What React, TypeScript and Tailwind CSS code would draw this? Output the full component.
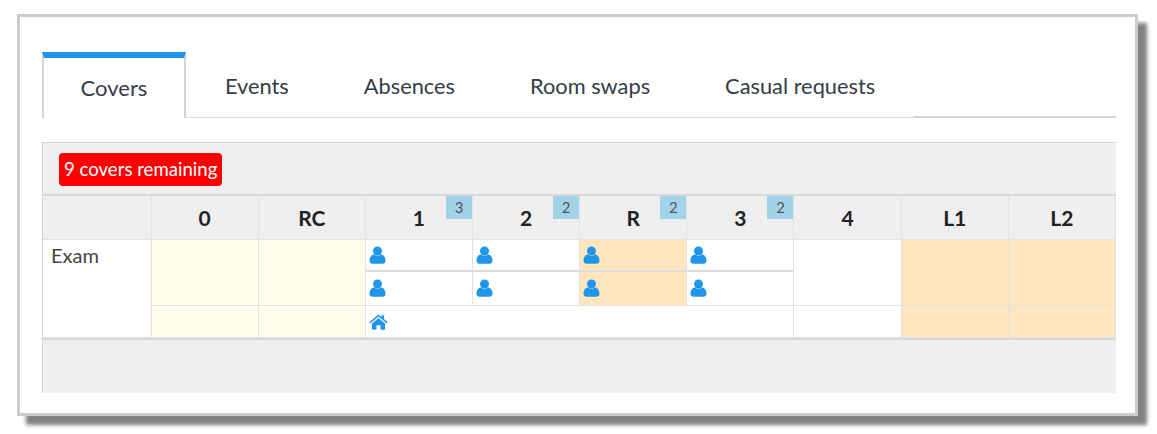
const tabs = ["Events", "Absences", "Room swaps", "Casual requests"];

const headers = [
  { label: "0" },
  { label: "RC" },
  { label: "1", badge: "3" },
  { label: "2", badge: "2" },
  { label: "R", badge: "2" },
  { label: "3", badge: "2" },
  { label: "4" },
  { label: "L1" },
  { label: "L2" },
];

const PersonIcon = () => (
  <svg width="17" height="18" viewBox="0 0 17 18" className="text-[#2196e8]" aria-hidden>
    <circle cx="8.5" cy="5" r="4.5" fill="currentColor" />
    <path d="M0.5 15c0-4 2-6.5 4.5-6.5 1 .8 2.2 1.2 3.5 1.2s2.500-.4 3.500-1.200c2.500 0 4.500 2.500 4.500 6.500 0 2-1.500 2.700-3 2.700H3.500c-1.500 0-3-.7-3-2.700z" fill="currentColor" />
  </svg>
);

const HomeIcon = () => (
  <svg width="19" height="16" viewBox="0 0 19 16" className="text-[#2196e8]" aria-hidden>
    <path d="M9.500 0.500l3 2.500V1.200h2.500v3.900l3.800 3.200-1 1.200-8.300-7-8.300 7-1-1.200z" fill="currentColor" />
    <path d="M9.500 4l6.500 5.500V15c0 .4-.3.700-.7.700H11.500v-4.500h-4v4.500H3.700c-.4 0-.7-.3-.7-.7V9.500z" fill="currentColor" />
  </svg>
);

const cellBorder = "border-r border-b border-[#e2e2e2]";
const topRow = "border-r border-b-2 border-r-[#e2e2e2] border-b-[#dddddd]";

const App = () => {
  return (
    <div className="h-[434px] w-[1157px] bg-white pl-[17px] pt-[14px] font-['Lato','Open_Sans',sans-serif]">
      <div className="h-[402px] w-[1121px] border-[3px] border-[#cccccc] bg-white pl-[22px] pr-[19px] pt-[35px] shadow-[9px_9px_4px_#808080]">
        <div className="flex h-[66px]">
          <div className="flex h-[66px] w-[144px] items-center justify-center border-x-2 border-t-[6px] border-[#d4d4d4] border-t-[#2196e8] bg-white pb-[2px] text-[22px] text-[#333d47]">
            Covers
          </div>
          <div className="flex flex-1 border-b border-[#dddddd] pl-[1.5px]">
            {tabs.map((tab) => (
              <div key={tab} className="flex items-center px-[37.5px] pt-[4px] text-[21.8px] text-[#333d47]">
                {tab}
              </div>
            ))}
          </div>
          <div className="w-[202px] border-b-2 border-[#d4d4d4]" />
        </div>

        <div className="mt-[24px] h-[251px] border-l border-t border-[#d4d4d4] bg-[#efefef]">
          <div className="flex h-[53px] items-center border-b-2 border-[#d8d8d8] pl-[16px] pt-[1px]">
            <span className="flex h-[33px] items-center rounded-[4px] bg-[#ff0000] px-[5px] pt-[1px] text-[18.6px] text-white">
              9 covers remaining
            </span>
          </div>

          <div className="grid grid-cols-[108.500px_repeat(9,1fr)] grid-rows-[44px_32px_34px_32px] border-b-2 border-[#d8d8d8]">
            <div className={cellBorder} />
            {headers.map((h) => (
              <div
                key={h.label}
                className={`relative flex items-center justify-center text-[21px] font-bold text-[#222222] ${cellBorder}`}
              >
                {h.label}
                {h.badge && (
                  <span className="absolute right-0 top-0 flex h-[23px] w-[26px] items-center justify-center bg-[#a3d3e8] text-[15px] font-normal text-[#555555]">
                    {h.badge}
                  </span>
                )}
              </div>
            ))}

            <div className={`col-start-1 row-span-3 row-start-2 bg-white pl-[8px] pt-[3px] text-[20px] leading-[24px] text-[#444444] ${cellBorder}`}>
              Exam
            </div>

            <div className={`col-start-2 row-span-2 row-start-2 bg-[#ffffec] ${cellBorder}`} />
            <div className={`col-start-3 row-span-2 row-start-2 bg-[#ffffec] ${cellBorder}`} />

            <div className={`col-start-4 row-start-2 flex items-center bg-white pl-[3px] ${topRow}`}><PersonIcon /></div>
            <div className={`col-start-5 row-start-2 flex items-center bg-white pl-[3px] ${topRow}`}><PersonIcon /></div>
            <div className={`col-start-6 row-start-2 flex items-center bg-[#ffe6bf] pl-[3px] ${topRow}`}><PersonIcon /></div>
            <div className={`col-start-7 row-start-2 flex items-center bg-white pl-[3px] ${topRow}`}><PersonIcon /></div>

            <div className={`col-start-8 row-span-2 row-start-2 bg-white ${cellBorder}`} />
            <div className={`col-start-9 row-span-2 row-start-2 bg-[#ffe6bf] ${cellBorder}`} />
            <div className={`col-start-10 row-span-2 row-start-2 bg-[#ffe6bf] ${cellBorder}`} />

            <div className={`col-start-4 row-start-3 flex items-center bg-white pb-[1px] pl-[3px] ${cellBorder}`}><PersonIcon /></div>
            <div className={`col-start-5 row-start-3 flex items-center bg-white pb-[1px] pl-[3px] ${cellBorder}`}><PersonIcon /></div>
            <div className={`col-start-6 row-start-3 flex items-center bg-[#ffe6bf] pb-[1px] pl-[3px] ${cellBorder}`}><PersonIcon /></div>
            <div className={`col-start-7 row-start-3 flex items-center bg-white pb-[1px] pl-[3px] ${cellBorder}`}><PersonIcon /></div>

            <div className={`col-start-2 row-start-4 bg-[#ffffec] ${cellBorder}`} />
            <div className={`col-start-3 row-start-4 bg-[#ffffec] ${cellBorder}`} />
            <div className={`col-span-4 col-start-4 row-start-4 flex items-center bg-white pl-[3px] ${cellBorder}`}><HomeIcon /></div>
            <div className={`col-start-8 row-start-4 bg-white ${cellBorder}`} />
            <div className={`col-start-9 row-start-4 bg-[#ffe6bf] ${cellBorder}`} />
            <div className={`col-start-10 row-start-4 bg-[#ffe6bf] ${cellBorder}`} />
          </div>
        </div>
      </div>
    </div>
  );
};

export default App;
